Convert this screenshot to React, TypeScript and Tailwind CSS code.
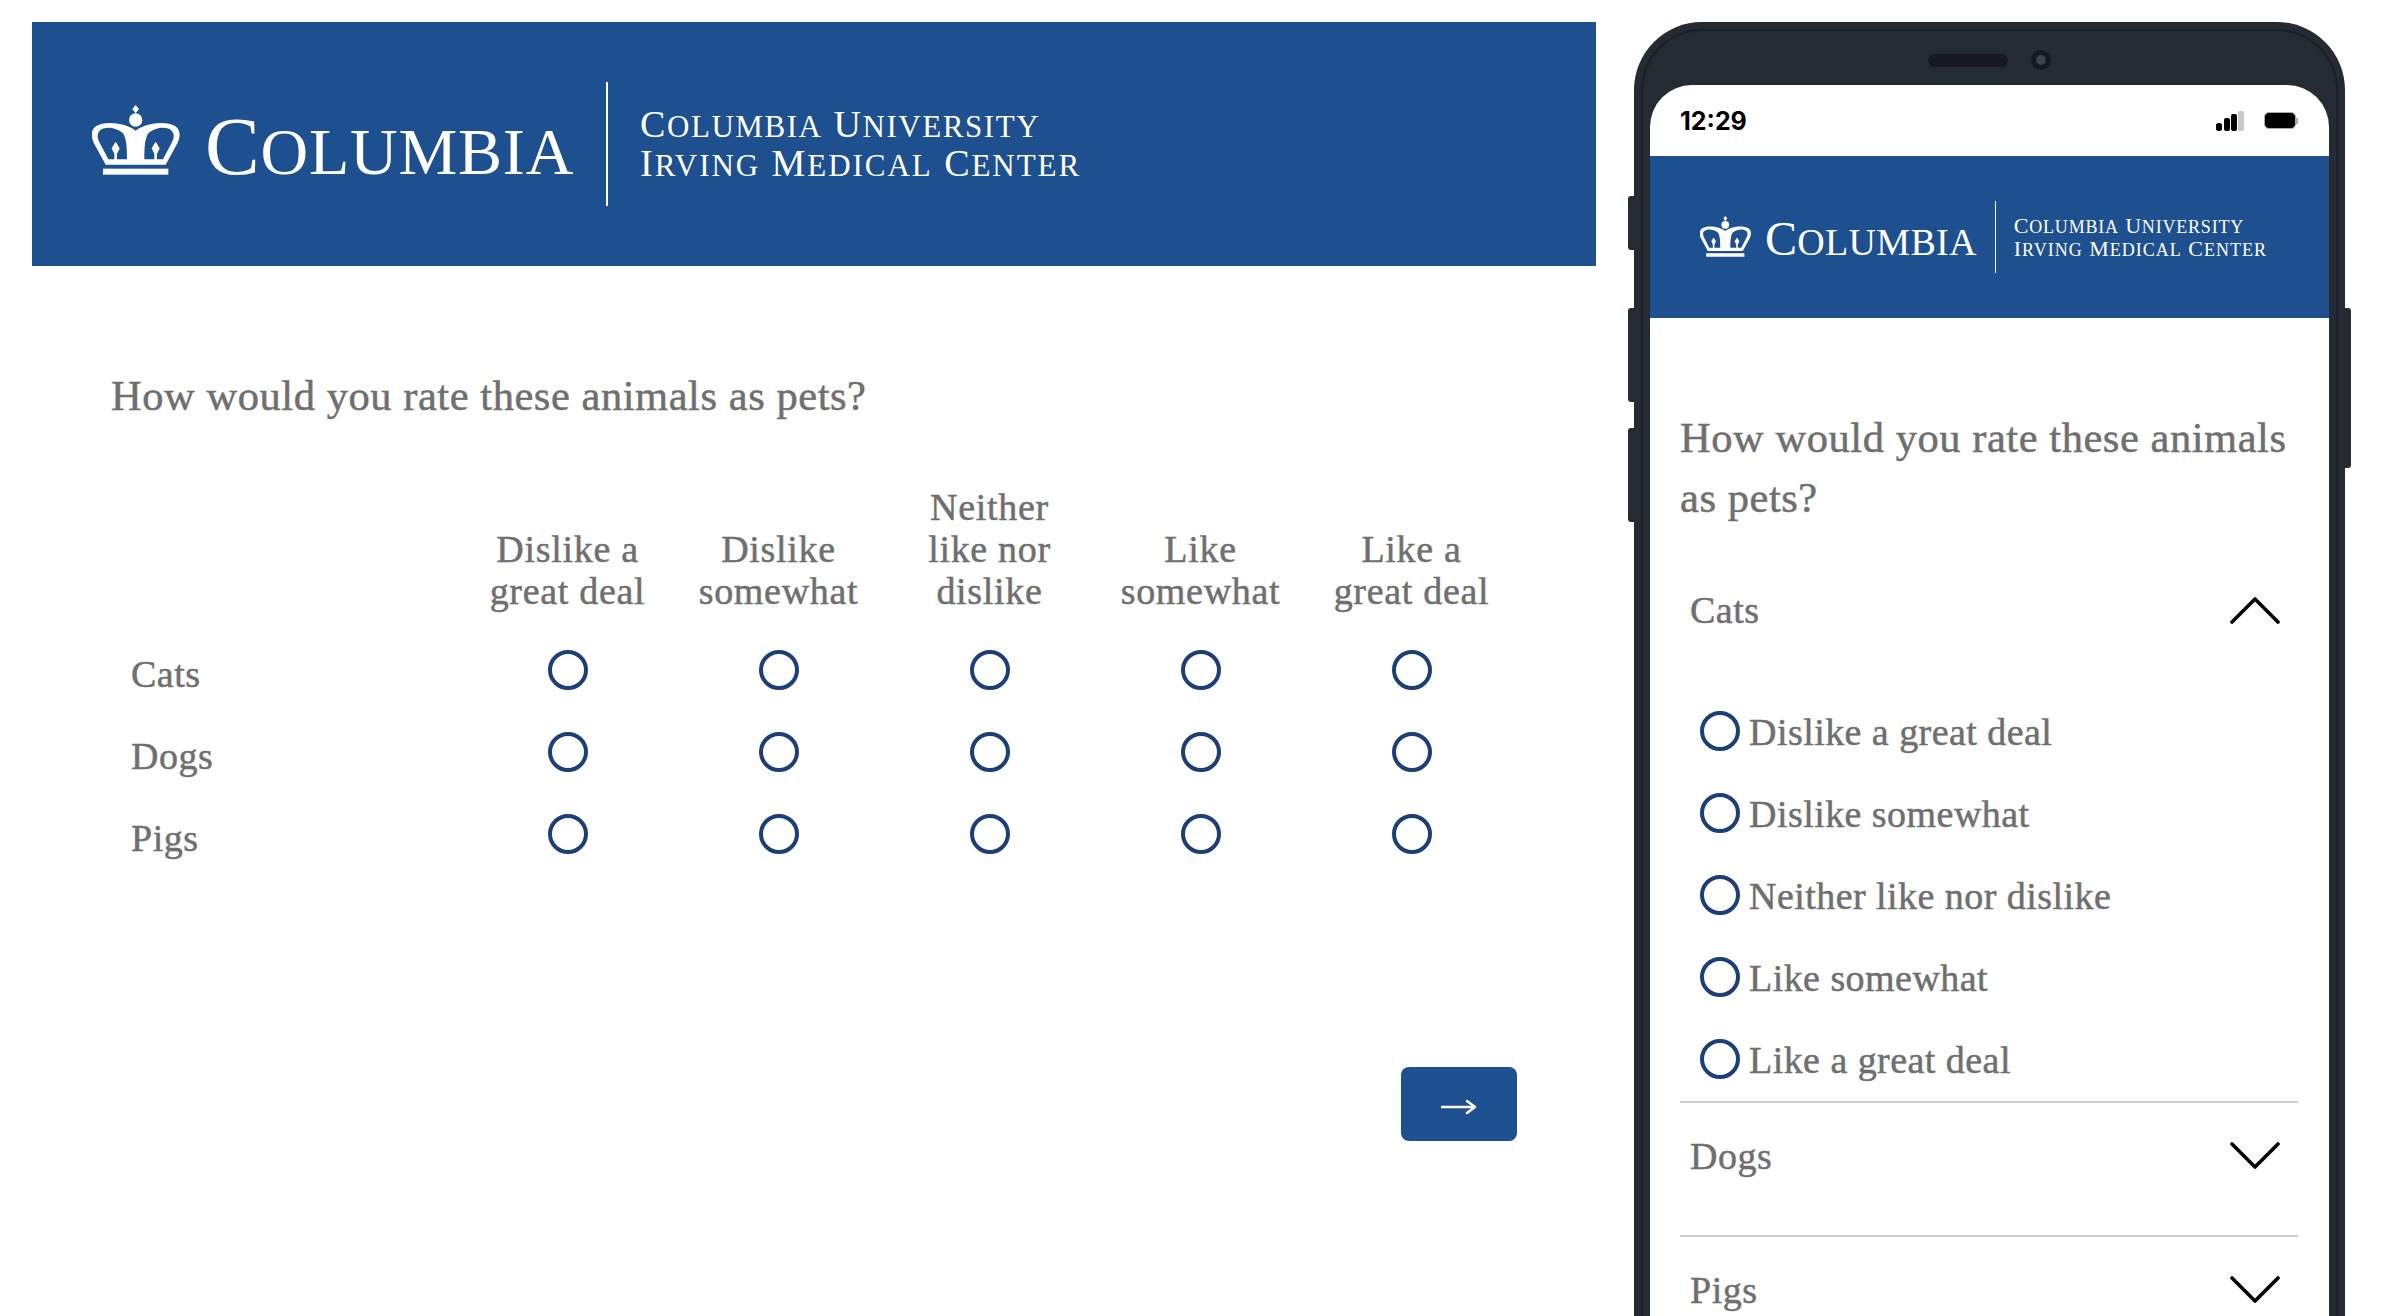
const serif = "font-['Liberation_Serif',serif]";
const body = "text-[#6f6f6f] [-webkit-text-stroke:0.5px_#6f6f6f]";
const options = ["Dislike a great deal", "Dislike somewhat", "Neither like nor dislike", "Like somewhat", "Like a great deal"];

function Crown({ className }: { className: string }) {
  return (
    <svg viewBox="68 45 262 210" className={className} fill="white">
      <path d="M198 45 L208 57 L198 70 L188 57 Z" />
      <circle cx="198" cy="90" r="20" />
      <path
        fillRule="evenodd"
        d="M198 122 C172 100 108 90 80 108 C62 120 64 140 72 158 L108 224 L288 224 L324 158 C332 140 334 120 316 108 C288 90 224 100 198 122 Z M172 208 C172 170 170 145 160 130 C140 112 105 108 90 122 C80 132 84 148 90 158 L116 208 Z M224 208 C224 170 226 145 236 130 C256 112 291 108 306 122 C316 132 312 148 306 158 L280 208 Z"
      />
      <path d="M138 155 L150 175 L142 192 L142 210 L134 210 L134 192 L126 175 Z" />
      <path d="M258 155 L270 175 L262 192 L262 210 L254 210 L254 192 L246 175 Z" />
      <rect x="100" y="236" width="196" height="18" />
    </svg>
  );
}

function Logo({ small }: { small?: boolean }) {
  const big = small ? "text-[48px] leading-none" : "text-[82px] leading-none";
  const rest = small ? "text-[38px] leading-none" : "text-[66px] leading-none";
  const capA = small ? "text-[22px] leading-[22px]" : "text-[38px] leading-[37px]";
  const capB = small ? "text-[18px]" : "text-[31px]";
  return (
    <div className={`flex items-center text-white ${serif}`}>
      <Crown className={small ? "w-[51px] h-[41px] mt-[-2px]" : "w-[88px] h-[70px] mt-[-9px]"} />
      <div className={small ? "ml-[14px] tracking-[0.3px] mt-[4px]" : "ml-[25px] tracking-[0.8px] mt-[6px]"}>
        <span className={big}>C</span>
        <span className={rest}>OLUMBIA</span>
      </div>
      <div className={small ? "w-[1px] h-[72px] bg-white ml-[18px]" : "w-[2px] h-[124px] bg-white ml-[32px]"} />
      <div className={small ? "ml-[18px] mt-[2px]" : "ml-[32px] mt-[2px]"}>
        <div className={`${capA} ${small ? "tracking-[0.8px]" : "tracking-[1.55px]"}`}>
          C<span className={capB}>OLUMBIA</span> U<span className={capB}>NIVERSITY</span>
        </div>
        <div className={`${capA} ${small ? "tracking-[1px]" : "tracking-[1.95px]"}`}>
          I<span className={capB}>RVING</span> M<span className={capB}>EDICAL</span> C<span className={capB}>ENTER</span>
        </div>
      </div>
    </div>
  );
}

function Radio() {
  return <span className="block w-[40px] h-[40px] rounded-full border-[4px] border-[#1c3f75] bg-white shrink-0" />;
}

function Chevron({ up }: { up?: boolean }) {
  return (
    <svg viewBox="0 0 50 28" className="w-[50px] h-[28px]" fill="none" stroke="black" strokeWidth="3.6" strokeLinecap="round" strokeLinejoin="round">
      <path d={up ? "M2 26 L25 3 L48 26" : "M2 2 L25 25 L48 2"} />
    </svg>
  );
}

function Desktop() {
  const cols = ["Dislike a great deal", "Dislike somewhat", "Neither like nor dislike", "Like somewhat", "Like a great deal"];
  const colLines = [["Dislike a", "great deal"], ["Dislike", "somewhat"], ["Neither", "like nor", "dislike"], ["Like", "somewhat"], ["Like a", "great deal"]];
  return (
    <div className="w-[1564px] shrink-0">
      <div className="h-[244px] bg-[#1e4f8e] flex items-center pl-[60px]">
        <Logo />
      </div>
      <div className={`px-[79px] ${body} ${serif}`}>
        <div className="mt-[107px] text-[42.5px] leading-[46px] tracking-[0.55px]">How would you rate these animals as pets?</div>
        <div className="mt-[67px] grid grid-cols-[351px_repeat(5,211px)] items-end">
          <div />
          {cols.map((c, i) => (
            <div key={c} className="text-center text-[38px] leading-[42px] tracking-[0.7px]">
              {colLines[i].map((l) => (
                <div key={l}>{l}</div>
              ))}
            </div>
          ))}
        </div>
        <div className="mt-[17px]">
          {["Cats", "Dogs", "Pigs"].map((animal) => (
            <div key={animal} className="grid grid-cols-[351px_repeat(5,211px)] h-[82px] items-center">
              <div className="pl-[20px] pt-[8px] text-[38px] leading-[42px] tracking-[0.5px]">{animal}</div>
              {cols.map((c) => (
                <div key={c} className="flex justify-center">
                  <Radio />
                </div>
              ))}
            </div>
          ))}
        </div>
        <div className="mt-[192px] flex justify-end">
          <button className="w-[116px] h-[74px] rounded-[8px] bg-[#1e4f8e] flex items-center justify-center">
            <svg viewBox="0 0 36 16" className="w-[36px] h-[16px] mt-[6px]" fill="none" stroke="white" strokeLinecap="round" strokeLinejoin="round">
              <path d="M1 8 H33" strokeWidth="2.6" />
              <path d="M26 2 L34 8 L26 14" strokeWidth="2.6" />
            </svg>
          </button>
        </div>
      </div>
    </div>
  );
}

function Phone() {
  return (
    <div className="relative ml-[38px] w-[711px] shrink-0">
      <span className="absolute left-[-6px] top-[174px] w-[6px] h-[54px] rounded-l-[3px] bg-[#252b33]" />
      <span className="absolute left-[-6px] top-[286px] w-[6px] h-[94px] rounded-l-[3px] bg-[#252b33]" />
      <span className="absolute left-[-6px] top-[406px] w-[6px] h-[94px] rounded-l-[3px] bg-[#252b33]" />
      <span className="absolute right-[-6px] top-[286px] w-[6px] h-[160px] rounded-r-[3px] bg-[#252b33]" />
      <div className="bg-[#252b33] rounded-t-[68px] px-[7px] pt-[7px]">
        <div className="border-x-2 border-t-2 border-[#1a1f26] rounded-t-[61px] px-[7px]">
          <div className="h-[54px] flex items-center justify-center pt-[4px]">
            <span className="w-[80px] h-[13px] rounded-full bg-[#15191f]" />
            <span className="ml-[23px] w-[20px] h-[20px] rounded-full border-[5px] border-[#15191f] bg-[#3b424b]" />
          </div>
          <div className="bg-white rounded-t-[42px] overflow-hidden h-[1300px]">
            <div className="h-[71px] pl-[30px] pr-[31px] flex items-center justify-between">
              <span className="font-['Inter',sans-serif] font-bold text-[25px] text-black mt-[2px]">12:29</span>
              <div className="flex items-center">
                <svg viewBox="0 0 28 20" className="w-[28px] h-[20px]">
                  <rect x="0" y="12" width="6" height="8" rx="2.5" fill="black" />
                  <rect x="8" y="7" width="6" height="13" rx="2" fill="black" />
                  <rect x="15" y="3" width="6" height="17" rx="2" fill="black" />
                  <rect x="22" y="0" width="6" height="20" rx="2" fill="#c8c8c8" />
                </svg>
                <span className="ml-[20px] w-[32px] h-[17px] rounded-[5px] border-[1.5px] border-[#aaaaaa] bg-black" />
                <span className="w-[2px] h-[6px] bg-[#aaaaaa]" />
              </div>
            </div>
            <div className="h-[162px] bg-[#1e4f8e] flex items-center pl-[50px]">
              <Logo small />
            </div>
            <div className={`${body} ${serif}`}>
              <div className="mt-[90px] pl-[30px] pr-[20px] text-[42.5px] leading-[60px] tracking-[0.55px]">
                How would you rate these animals as pets?
              </div>
              <div className="ml-[30px] mr-[31px] mt-[29px]">
                <div className="border-b-2 border-[#cccccc]">
                  <div className="h-[106px] flex items-center justify-between pl-[10px] pr-[18px]">
                    <span className="text-[38px] tracking-[0.5px]">Cats</span>
                    <Chevron up />
                  </div>
                  <div className="mt-[27px] pb-[1px] pl-[20px]">
                    {options.map((o) => (
                      <div key={o} className="h-[82px] flex items-center">
                        <Radio />
                        <span className="ml-[9px] pt-[2px] text-[38px] leading-[42px] tracking-[0.45px]">{o}</span>
                      </div>
                    ))}
                  </div>
                </div>
                {["Dogs", "Pigs"].map((a) => (
                  <div key={a} className="border-b-2 border-[#cccccc] pb-[26px]">
                    <div className="h-[106px] flex items-center justify-between pl-[10px] pr-[18px]">
                      <span className="text-[38px] tracking-[0.5px]">{a}</span>
                      <Chevron />
                    </div>
                  </div>
                ))}
              </div>
            </div>
          </div>
        </div>
      </div>
    </div>
  );
}

export default function App() {
  return (
    <div className="h-screen overflow-hidden bg-white flex items-start pl-[32px] pt-[22px]">
      <Desktop />
      <Phone />
    </div>
  );
}
